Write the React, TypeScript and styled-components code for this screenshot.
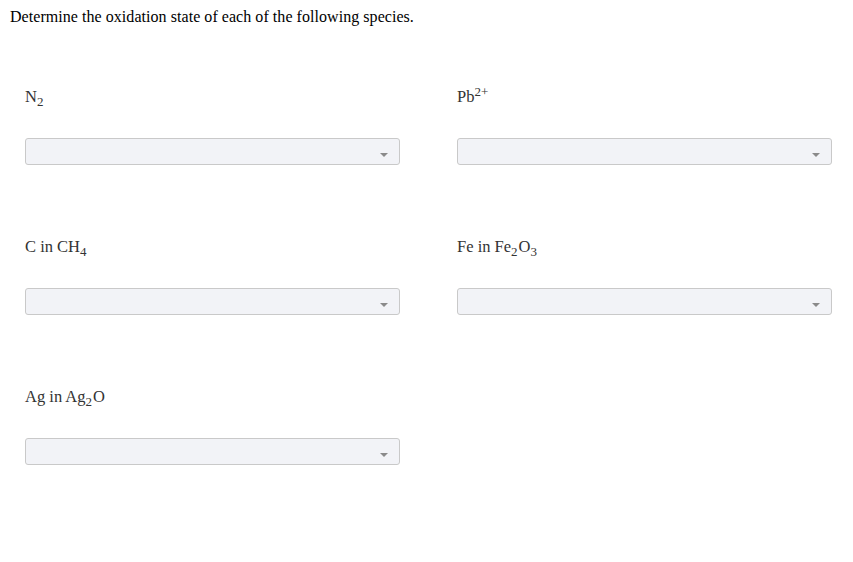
import styled, { createGlobalStyle } from 'styled-components';

const GlobalStyle = createGlobalStyle`
  body {
    margin: 0;
    background: #fff;
    font-family: "Liberation Serif", "Times New Roman", serif;
  }
`;

const Page = styled.div`
  width: 853px;
  height: 562px;
  box-sizing: border-box;
  padding: 8px 0 0 10px;
`;

const Title = styled.p`
  margin: 0;
  font-size: 16px;
  line-height: 18px;
  letter-spacing: 0.05px;
  color: #000;
`;

const Grid = styled.div`
  display: grid;
  grid-template-columns: 375px 375px;
  column-gap: 57px;
  row-gap: 73px;
  margin: 62px 0 0 15px;
`;

const Cell = styled.div`
  display: flex;
  flex-direction: column;
  gap: 32px;
`;

const Label = styled.div`
  font-size: 16.5px;
  line-height: 18px;
  height: 18px;
  color: #333;

  sub,
  sup {
    font-size: 13px;
    line-height: 0;
  }

  sub {
    margin-right: 1px;
  }
`;

const Select = styled.div`
  position: relative;
  height: 27px;
  box-sizing: border-box;
  border: 1px solid #c9c9c9;
  border-radius: 3px;
  background: #f2f3f7;
`;

const Caret = styled.span`
  position: absolute;
  right: 11px;
  top: 14px;
  width: 0;
  height: 0;
  border-left: 4px solid transparent;
  border-right: 4px solid transparent;
  border-top: 4px solid #8a8a8a;
`;

const items = [
  <>N<sub>2</sub></>,
  <>Pb<sup>2+</sup></>,
  <>C in CH<sub>4</sub></>,
  <>Fe in Fe<sub>2</sub>O<sub>3</sub></>,
  <>Ag in Ag<sub>2</sub>O</>,
];

function App() {
  return (
    <Page>
      <GlobalStyle />
      <Title>Determine the oxidation state of each of the following species.</Title>
      <Grid>
        {items.map((label, i) => (
          <Cell key={i}>
            <Label>{label}</Label>
            <Select>
              <Caret />
            </Select>
          </Cell>
        ))}
      </Grid>
    </Page>
  );
}

export default App;
